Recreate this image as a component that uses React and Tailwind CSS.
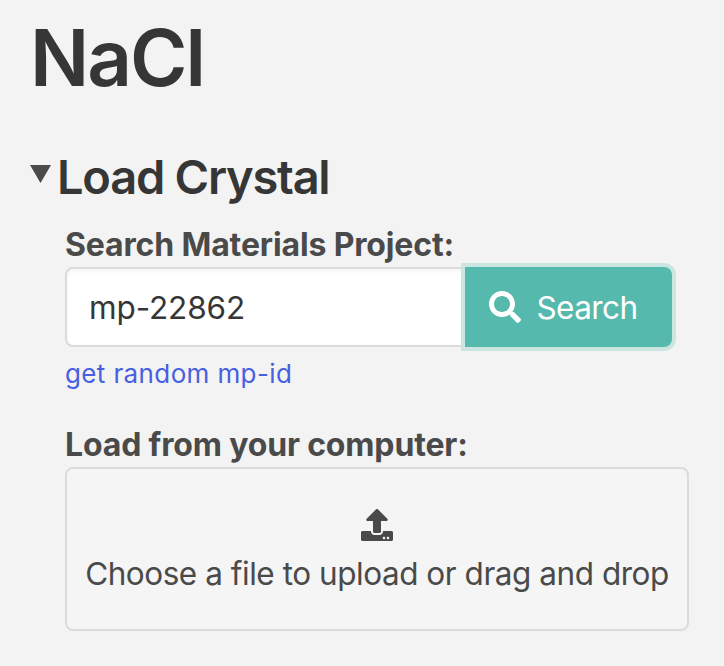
import { FaSearch, FaUpload } from "react-icons/fa";

export default function App() {
  return (
    <main className="h-[666px] w-[724px] overflow-hidden bg-[#f3f3f3] pl-[30px] font-['Inter',sans-serif] text-[#4a4a4a]">
      <h1 className="pt-[13px] text-[78px] leading-[90px] font-semibold tracking-[-2px] whitespace-nowrap text-[#363636]">NaCl</h1>
      <div className="mt-[44px] flex h-[60px] items-center">
        <svg className="-mt-[6px] h-[20px] w-[21px]" viewBox="0 0 21 20"><path d="M0 1H21L10.5 19Z" fill="#4a4a4a" /></svg>
        <h2 className="ml-[6px] text-[47px] leading-[60px] font-semibold tracking-[-1.25px] whitespace-nowrap text-[#363636]">Load Crystal</h2>
      </div>
      <section className="ml-[35px]">
        <h3 className="mt-[17px] h-[43px] pt-px text-[32px] leading-[40px] font-bold tracking-[-0.14px] whitespace-nowrap">Search Materials Project:</h3>
        <div className="flex h-[80px]">
          <input className="w-[400px] rounded-l-[8px] border-2 border-[#dbdbdb] bg-white px-[22px] pt-[2px] text-[31.5px] tracking-[-0.1px] text-[#363636] shadow-[inset_0_2px_4px_rgba(10,10,10,0.05)] outline-none" defaultValue="mp-22862" />
          <button className="flex w-[207px] items-center rounded-r-[8px] bg-[#55b9ad] pl-[24px] text-[31.5px] tracking-[-0.6px] text-white shadow-[0_0_0_4px_#cbe5e1]">
            <FaSearch className="size-[32px]" />
            <span className="ml-[15.5px] pt-[2px]">Search</span>
          </button>
        </div>
        <a className="mt-[7px] block h-[40px] text-[26px] leading-[40px] tracking-[0.38px] whitespace-nowrap text-[#485fe0]">get random mp-id</a>
        <h3 className="mt-[30px] h-[43px] pt-px text-[32px] leading-[40px] font-bold tracking-[-0.16px] whitespace-nowrap">Load from your computer:</h3>
        <div className="flex h-[164px] w-[624px] flex-col items-center rounded-[8px] border-2 border-[#dbdbdb] bg-[#f5f5f5] pt-[40px]">
          <FaUpload className="size-[32px]" />
          <span className="mt-[13px] text-[31.5px] leading-[40px] tracking-[-0.46px] whitespace-nowrap">Choose a file to upload or drag and drop</span>
        </div>
      </section>
    </main>
  );
}
